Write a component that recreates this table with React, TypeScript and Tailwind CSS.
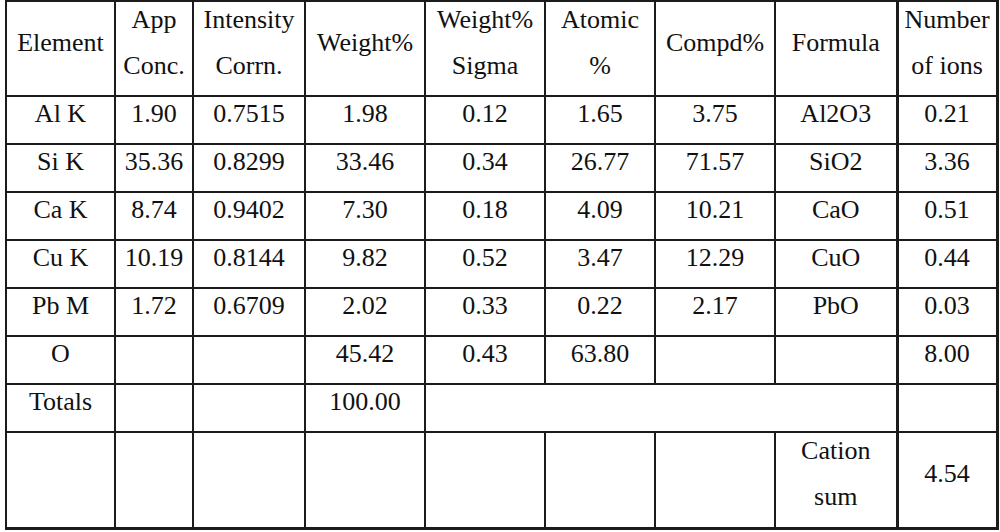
const widths = [109, 78, 112, 120, 120, 110, 120, 122, 100];

const rows: string[][] = [
  ["Al K", "1.90", "0.7515", "1.98", "0.12", "1.65", "3.75", "Al2O3", "0.21"],
  ["Si K", "35.36", "0.8299", "33.46", "0.34", "26.77", "71.57", "SiO2", "3.36"],
  ["Ca K", "8.74", "0.9402", "7.30", "0.18", "4.09", "10.21", "CaO", "0.51"],
  ["Cu K", "10.19", "0.8144", "9.82", "0.52", "3.47", "12.29", "CuO", "0.44"],
  ["Pb M", "1.72", "0.6709", "2.02", "0.33", "0.22", "2.17", "PbO", "0.03"],
  ["O", "", "", "45.42", "0.43", "63.80", "", "", "8.00"],
];

const td = "border-2 border-[#1b1b1b] p-0 text-center align-middle";
const last = "border-x-[3px]";

function Txt({ children }: { children?: React.ReactNode }) {
  return <div className="-translate-y-[6px]">{children}</div>;
}

export default function App() {
  return (
    <div className="w-[1000px] h-[532px] bg-white pl-[5px] font-['Liberation_Serif',serif] text-[26px] leading-[46px] text-[#111]">
      <table className="table-fixed border-collapse w-[993px] border-b-[3px] border-[#1b1b1b]">
        <colgroup>
          {widths.map((w, i) => (
            <col key={i} style={{ width: w }} />
          ))}
        </colgroup>
        <tbody>
          <tr className="h-[95px]">
            <td className={td}><Txt>Element</Txt></td>
            <td className={td}><Txt>App<br />Conc.</Txt></td>
            <td className={td}><Txt>Intensity<br />Corrn.</Txt></td>
            <td className={td}><Txt>Weight%</Txt></td>
            <td className={td}><Txt>Weight%<br />Sigma</Txt></td>
            <td className={td}><Txt>Atomic<br />%</Txt></td>
            <td className={td}><Txt>Compd%</Txt></td>
            <td className={td}><Txt>Formula</Txt></td>
            <td className={`${td} ${last}`}><Txt>Number<br />of ions</Txt></td>
          </tr>
          {rows.map((r, i) => (
            <tr key={i} className="h-[48px]">
              {r.map((c, j) => (
                <td key={j} className={j === 8 ? `${td} ${last}` : td}>
                  <Txt>{c}</Txt>
                </td>
              ))}
            </tr>
          ))}
          <tr className="h-[48px]">
            <td className={td}><Txt>Totals</Txt></td>
            <td className={td}></td>
            <td className={td}></td>
            <td className={td}><Txt>100.00</Txt></td>
            <td className={td} colSpan={4}></td>
            <td className={`${td} ${last}`}></td>
          </tr>
          <tr className="h-[96px]">
            <td className={td}></td>
            <td className={td}></td>
            <td className={td}></td>
            <td className={td}></td>
            <td className={td}></td>
            <td className={td}></td>
            <td className={td}></td>
            <td className={td}><Txt>Cation<br />sum</Txt></td>
            <td className={`${td} ${last} border-b-[3px]`}><Txt>4.54</Txt></td>
          </tr>
        </tbody>
      </table>
    </div>
  );
}
